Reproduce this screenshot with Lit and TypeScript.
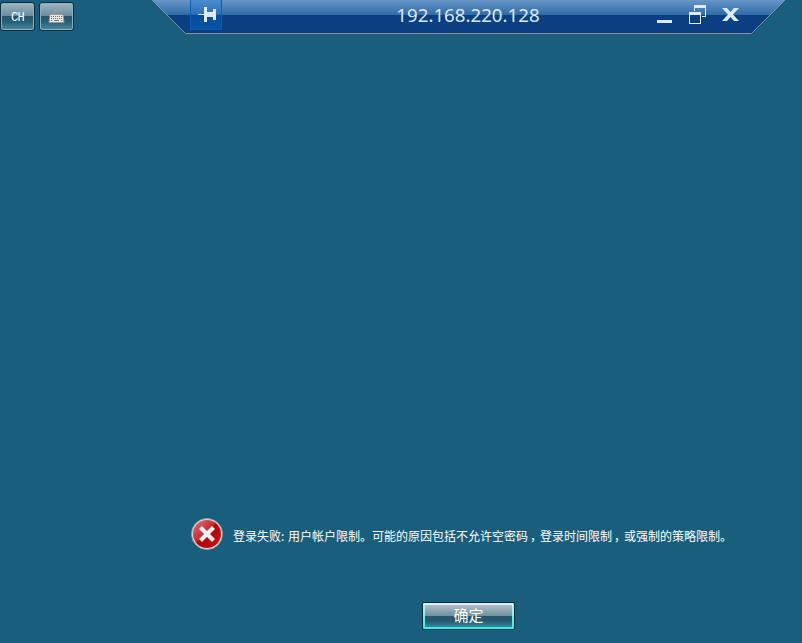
import { LitElement, html, css } from "lit";
import { customElement } from "lit/decorators.js";

@customElement("connection-bar")
export class ConnectionBar extends LitElement {
  static styles = css`
    :host { display: block; width: 634px; height: 35px; }
    .bar { display: grid; width: 634px; height: 35px; }
    .bar > * { grid-area: 1 / 1; }
    .row { display: flex; align-items: flex-start; height: 34px; padding-left: 38px; box-sizing: border-box; }
    .pin { display: block; width: 32px; height: 30px; flex: none; }
    .title { flex: 1; padding-left: 58px; text-align: center; font: 18.7px/29px "Noto Sans", "Open Sans", sans-serif; color: #dce8f2; white-space: nowrap; }
    .controls { display: flex; width: 130px; flex: none; }
    svg { display: block; }
  `;
  render() {
    return html`<div class="bar">
      <svg width="634" height="35" viewBox="0 0 634 35">
        <defs>
          <linearGradient id="g" x1="0" y1="0" x2="0" y2="1">
            <stop offset="0" stop-color="#6796c8" /><stop offset="1" stop-color="#306ba6" />
          </linearGradient>
          <clipPath id="c"><path d="M0 0H633L600 34H33Z" /></clipPath>
        </defs>
        <g clip-path="url(#c)">
          <rect width="634" height="15" fill="url(#g)" />
          <rect y="15" width="634" height="19" fill="#0a4081" />
        </g>
        <path d="M0 0L33.5 33.5H599.5L633 0" fill="none" stroke="#8492a5" />
        <path d="M34 34.5H600" stroke="#43545f" opacity=".7" />
      </svg>
      <div class="row">
        <svg class="pin" viewBox="0 0 32 30">
          <defs><linearGradient id="p" x1="0" y1="0" x2="0" y2="1">
            <stop offset="0" stop-color="#4c8bcd" /><stop offset=".48" stop-color="#2c70b8" />
            <stop offset=".5" stop-color="#074b9b" /><stop offset="1" stop-color="#0754a6" />
          </linearGradient></defs>
          <rect width="32" height="30" fill="url(#p)" />
          <path d="M.5 0V29.5H31.5V0" fill="none" stroke="#0a5db2" />
          <path d="M8 14h6V7h3v5h6V9h3v11h-3v-3h-6v5h-3v-7H8z" fill="#dfe9f1" />
        </svg>
        <div class="title">192.168.220.128</div>
        <svg class="controls" width="130" height="34" viewBox="0 0 130 34">
          <path d="M1 20h15v3H1z" fill="#dfe9f1" />
          <path d="M33 12h12v12H33z M34 15v8h10v-8z M38 5h12v12h-4v-1h3V8H39v3h-1z" fill="#dfe9f1" fill-rule="evenodd" />
          <path d="M66 8h5l3.500 4L78 8h5l-6 6.500L83 21h-5l-3.500-4L71 21h-5l6-6.500z" fill="#dfe9f1" />
        </svg>
      </div>
    </div>`;
  }
}

@customElement("app-root")
export class AppRoot extends LitElement {
  static styles = css`
    :host { display: block; width: 802px; height: 643px; overflow: hidden; background: #195e7c; color: #fff; font-family: "Noto Sans CJK SC", sans-serif; }
    .screen { display: flex; flex-direction: column; height: 643px; }
    header { display: flex; height: 35px; flex: none; }
    .tools { display: flex; gap: 4px; width: 152px; padding-top: 2px; box-sizing: border-box; }
    .tool { display: flex; align-items: center; justify-content: center; width: 35px; height: 29px; box-sizing: border-box; padding: 0; border: 1px solid #0c2c3b; border-radius: 3px; box-shadow: inset 0 0 0 1px #8fb0be; background: linear-gradient(#a0b6c1 0, #6a8e9f 47%, #275668 50%, #256078 70%, #4b8ca4 100%); color: #fff; }
    .lang { font: 12px/12px "Liberation Mono", monospace; letter-spacing: -0.7px; padding-top: 2px; }
    .keyboard { padding-right: 1px; }
    .spacer { flex: 1; }
    .message { display: flex; align-items: center; height: 34px; padding-left: 190px; font-size: 12px; line-height: 18px; white-space: nowrap; }
    .message svg { flex: none; }
    .text { display: flex; padding: 4px 0 0 9px; }
    .label { width: 55px; }
    .comma { font-feature-settings: "halt" 1; padding: 0 4px 0 2px; }
    footer { display: flex; padding: 51px 0 13px 422px; }
    .ok { width: 93px; height: 28px; box-sizing: border-box; padding: 0; border: 1px solid #0a2b38; border-radius: 2px; background: linear-gradient(#e2edf1, #28f1ee 92%); display: flex; }
    .face { flex: 1; margin: 2px; background: linear-gradient(#adbfc8 0, #7192a1 48%, #28576a 50%, #245b70 72%, #3e8498 100%); color: #fff; font: 15px/20px "Noto Sans CJK SC", sans-serif; height: 22px; text-align: center; }
    svg { display: block; }
  `;
  render() {
    return html`<div class="screen">
      <header>
        <div class="tools">
          <button class="tool lang">CH</button>
          <button class="tool keyboard" aria-label="键盘">
            <svg width="17" height="17" viewBox="0 0 17 17">
              <path d="M6.500 6V3.500H9.500L10.500 2.500H13.500V1" fill="none" stroke="#a49ca0" />
              <path d="M2 6.500h13l1 8H1z" fill="#e9e6e6" stroke="#a19799" />
              <path d="M3 8.500h11M3 10.500h11" stroke="#777478" stroke-dasharray="1 1" />
              <path d="M3 12.500h1m2 0h5m2 0h1" stroke="#777478" />
            </svg>
          </button>
        </div>
        <connection-bar></connection-bar>
      </header>
      <div class="spacer"></div>
      <div class="message">
        <svg width="34" height="34" viewBox="0 0 34 34">
          <defs><linearGradient id="r" x1="0" y1="0" x2="1" y2="1">
            <stop offset="0" stop-color="#d9797b" /><stop offset=".43" stop-color="#c72d31" />
            <stop offset=".5" stop-color="#b10308" /><stop offset="1" stop-color="#cb151b" />
          </linearGradient></defs>
          <circle cx="17" cy="17" r="15.500" fill="#dedddd" stroke="#929b9f" stroke-width=".8" />
          <circle cx="17" cy="17" r="14" fill="url(#r)" />
          <path d="M10.500 10.500L23.500 23.500M23.500 10.500L10.500 23.500" stroke="#f2f2f2" stroke-width="4.200" />
        </svg>
        <div class="text"><span class="label">登录失败:</span><span>用户帐户限制。可能的原因包括不允许空密码<span class="comma">，</span>登录时间限制<span class="comma">，</span>或强制的策略限制。</span></div>
      </div>
      <footer><button class="ok"><span class="face">确定</span></button></footer>
    </div>`;
  }
}
